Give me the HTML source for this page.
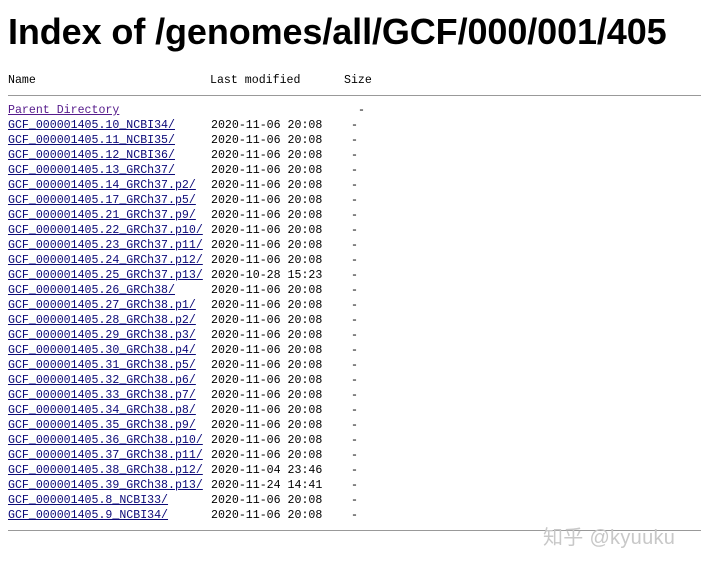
<!DOCTYPE html>
<html><head><meta charset="utf-8"><style>
body{margin:0;background:#fff;width:701px;height:566px;overflow:hidden;position:relative;font-family:"Liberation Mono",monospace;font-size:11.6px;color:#000}
h1{position:absolute;left:8px;top:11px;margin:0;font:bold 36px "Liberation Sans",sans-serif;letter-spacing:-0.1px;white-space:nowrap}
.r{position:absolute;left:0;height:15px;line-height:15px;white-space:nowrap}
.r span{position:absolute;top:0}
.a{left:8px}.d{left:211px}.s{left:351px}
a{text-decoration:underline;color:#0c0a78}
a.v{color:#551a8b}
.hr{position:absolute;left:8px;right:0;height:1px;background:#999}
.wm{position:absolute;left:543px;top:521px;font:20px "Liberation Sans","Noto Sans CJK SC",sans-serif;color:#c8c8c8;letter-spacing:0.3px}
</style></head><body>
<h1>Index of /genomes/all/GCF/000/001/405</h1>
<div class="r" style="top:73px"><span class="a">Name</span><span class="d" style="left:210px">Last modified</span><span style="left:344px">Size</span></div>
<div class="hr" style="top:95px"></div>
<div class="r" style="top:103px"><span class="a"><a class="v">Parent Directory</a></span><span style="left:358px">-</span></div>
<div id="rows"></div>
<div class="hr" style="top:530px"></div>
<div class="wm">知乎 @kyuuku</div>
<script>
var d=[["10_NCBI34","2020-11-06 20:08"],["11_NCBI35","2020-11-06 20:08"],["12_NCBI36","2020-11-06 20:08"],["13_GRCh37","2020-11-06 20:08"],["14_GRCh37.p2","2020-11-06 20:08"],["17_GRCh37.p5","2020-11-06 20:08"],["21_GRCh37.p9","2020-11-06 20:08"],["22_GRCh37.p10","2020-11-06 20:08"],["23_GRCh37.p11","2020-11-06 20:08"],["24_GRCh37.p12","2020-11-06 20:08"],["25_GRCh37.p13","2020-10-28 15:23"],["26_GRCh38","2020-11-06 20:08"],["27_GRCh38.p1","2020-11-06 20:08"],["28_GRCh38.p2","2020-11-06 20:08"],["29_GRCh38.p3","2020-11-06 20:08"],["30_GRCh38.p4","2020-11-06 20:08"],["31_GRCh38.p5","2020-11-06 20:08"],["32_GRCh38.p6","2020-11-06 20:08"],["33_GRCh38.p7","2020-11-06 20:08"],["34_GRCh38.p8","2020-11-06 20:08"],["35_GRCh38.p9","2020-11-06 20:08"],["36_GRCh38.p10","2020-11-06 20:08"],["37_GRCh38.p11","2020-11-06 20:08"],["38_GRCh38.p12","2020-11-04 23:46"],["39_GRCh38.p13","2020-11-24 14:41"],["8_NCBI33","2020-11-06 20:08"],["9_NCBI34","2020-11-06 20:08"]];
var h="";d.forEach(function(x,i){var t=118+i*15;h+='<div class="r" style="top:'+t+'px"><span class="a"><a>GCF_000001405.'+x[0]+'/</a></span><span class="d">'+x[1]+'</span><span class="s">-</span></div>';});
document.getElementById("rows").innerHTML=h;
</script>
</body></html>
